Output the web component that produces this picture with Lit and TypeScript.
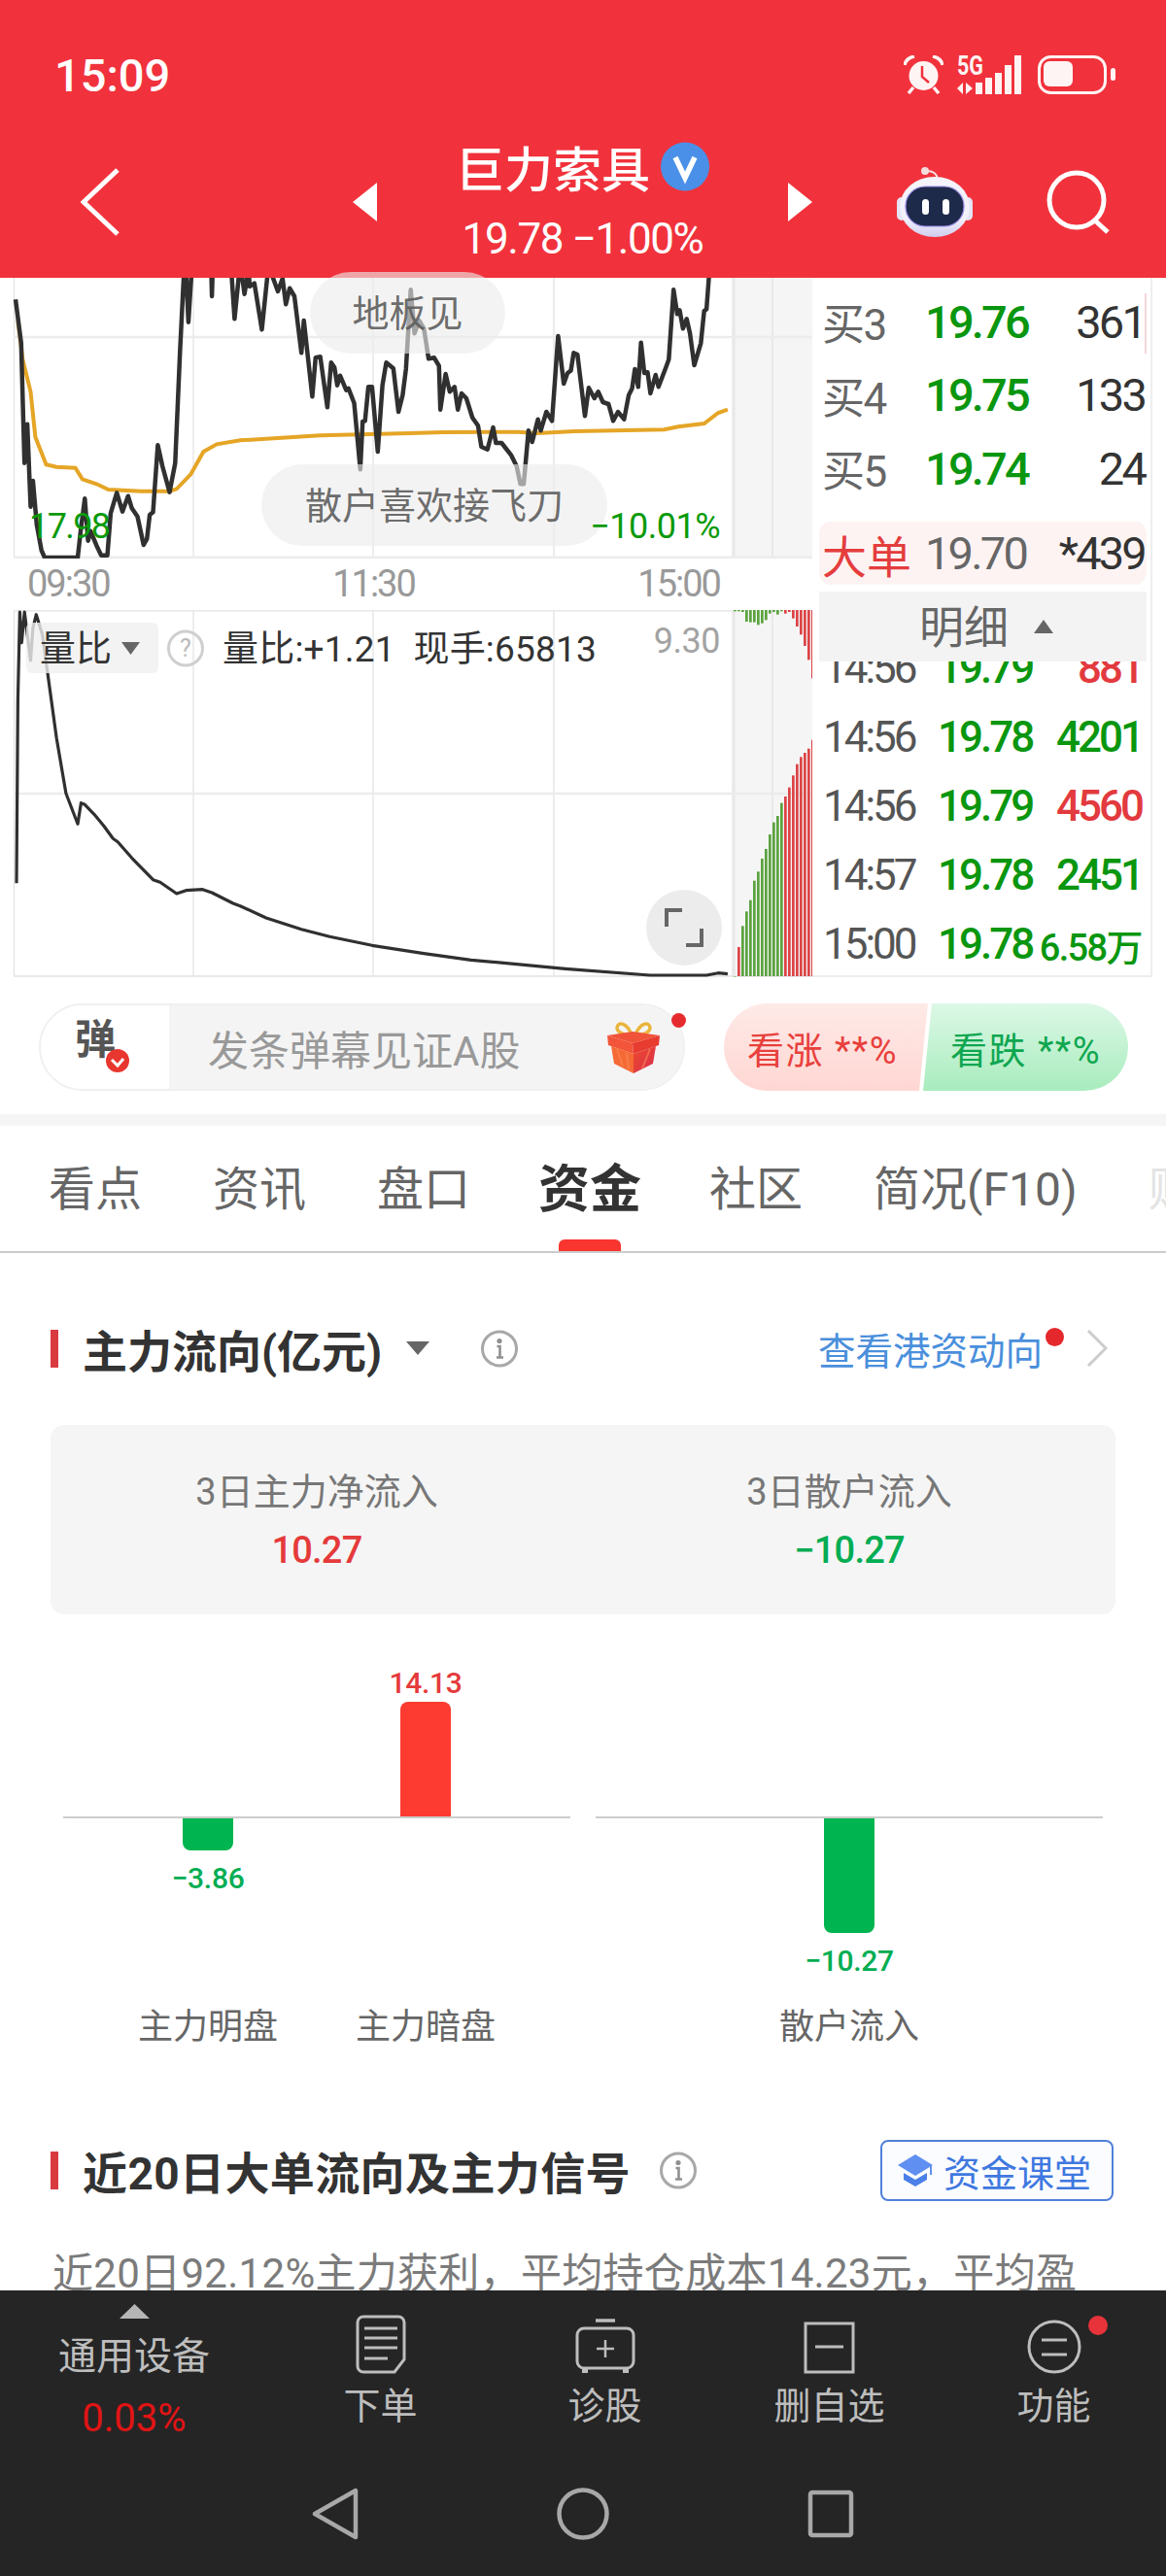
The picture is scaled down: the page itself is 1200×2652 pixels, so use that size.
import { css, html, LitElement, svg } from "lit";
import { customElement } from "lit/decorators.js";

// traces read off the reference; x is scaled 2.063, y is scaled 3 from page coords
const PRICE = [
  [33, 85], [45, 220], [52, 590], [58, 470], [65, 725], [70, 645], [78, 780], [88, 860], [95, 882], [165, 882],
  [172, 790], [180, 700], [187, 830], [192, 800], [205, 845], [215, 875], [228, 875], [235, 745], [248, 682],
  [260, 740], [272, 692], [280, 730], [292, 755], [305, 843], [312, 825], [318, 750], [325, 742], [335, 535],
  [345, 600], [360, 680], [372, 590], [382, 250], [390, 20], [394, -30], [400, 155], [408, -30], [448, -30],
  [450, 75], [452, -30], [490, -30], [498, 145], [510, -30], [519, 68], [528, -10], [530, 45], [540, 35],
  [556, 178], [570, -20], [590, 60], [600, 20], [607, 100], [615, 50], [625, 75], [640, 250], [645, 150],
  [663, 385], [670, 265], [680, 262], [695, 418], [703, 280], [710, 295], [716, 350], [722, 320], [735, 365],
  [740, 360], [752, 405], [765, 610], [770, 462], [775, 460], [782, 355], [790, 355], [802, 555], [812, 350],
  [820, 280], [835, 298], [846, 432], [855, 380], [862, 300], [872, 55], [880, 190], [890, 150], [900, 175],
  [910, 268], [922, 265], [932, 290], [935, 425], [946, 315], [955, 370], [965, 355], [972, 425], [980, 375],
  [990, 390], [1003, 450], [1015, 475], [1022, 540], [1035, 548], [1047, 480], [1053, 528], [1065, 528],
  [1085, 565], [1097, 600], [1105, 655], [1112, 655], [1122, 490], [1130, 525], [1142, 455], [1148, 490],
  [1160, 432], [1172, 460], [1185, 198], [1197, 345], [1205, 312], [1212, 305], [1218, 250], [1226, 255],
  [1242, 445], [1250, 358], [1262, 390], [1270, 370], [1280, 402], [1292, 408], [1302, 460], [1312, 432],
  [1325, 455], [1335, 380], [1342, 360], [1348, 300], [1355, 355], [1361, 218], [1368, 312], [1375, 310],
  [1381, 375], [1392, 318], [1398, 355], [1415, 290], [1420, 270], [1430, 55], [1438, 130], [1443, 118],
  [1450, 175], [1458, 145], [1465, 190], [1474, 288], [1488, 220], [1495, 120], [1500, 115], [1505, 20], [1508, -30],
];
const AVERAGE = [
  [38, 150], [48, 270], [65, 370], [75, 510], [98, 595], [120, 602], [160, 605], [175, 640], [205, 655], [230, 672],
  [300, 677], [360, 677], [375, 670], [405, 625], [432, 555], [460, 532], [510, 520], [680, 505], [870, 498],
  [940, 495], [1100, 494], [1140, 498], [1220, 492], [1410, 487], [1440, 478], [1495, 468], [1525, 435], [1545, 425],
];
const RATIO = [
  [35, 868], [38, 300], [42, 30], [46, 125], [52, 30], [58, 100], [65, 180], [70, 80], [77, 38], [90, 100],
  [105, 260], [120, 420], [140, 590], [165, 685], [172, 620], [180, 625], [200, 655], [220, 690], [240, 730],
  [250, 740], [280, 790], [325, 857], [340, 865], [375, 900], [395, 890], [430, 887], [450, 897], [495, 930],
  [510, 938], [565, 975], [640, 1010], [700, 1033], [790, 1060], [900, 1085], [1000, 1105], [1200, 1132],
  [1380, 1152], [1500, 1152], [1525, 1145], [1545, 1148],
];
const BARS_DOWN = [28, 28, 30, 60, 62, 62, 70, 65, 55, 35, 30, 38, 28, 35, 30, 50, 75, 100, 135, 178, 235];
const BARS_UP = [1155, 1065, 1000, 955, 920, 860, 832, 792, 762, 717, 680, 660, 620, 600, 572, 535, 500, 478, 465, 452, 425];

const points = (trace: number[][], originY: number) =>
  trace.map(([x, y]) => `${(x / 2.063).toFixed(1)},${(originY + y / 3).toFixed(1)}`).join(" ");

const BOOK = [
  ["买3", "19.76", "361"],
  ["买4", "19.75", "133"],
  ["买5", "19.74", "24"],
];
const TICKS = [
  ["14:56", "19.79", "881", "up"],
  ["14:56", "19.78", "4201", "down"],
  ["14:56", "19.79", "4560", "up"],
  ["14:57", "19.78", "2451", "down"],
  ["15:00", "19.78", "6.58万", "down small"],
];
const TABS = ["看点", "资讯", "盘口", "资金", "社区", "简况(F10)", "财务"];

const infoIcon = html`<svg class="info" viewBox="0 0 38 39">
  <circle cx="19" cy="19.5" r="17.5" fill="none" stroke="#a8a8a8" stroke-width="3" />
  <circle cx="19" cy="11.5" r="2.6" fill="#909090" />
  <path d="M16.5 17h3v11M16 28.500h7" fill="none" stroke="#909090" stroke-width="2.600" />
</svg>`;

@customElement("app-root")
export class AppRoot extends LitElement {
  static styles = css`
    :host {
      display: block;
      width: 1200px;
      height: 2652px;
      overflow: hidden;
      background: #fff;
      color: #333;
      font-family: Roboto, "Noto Sans CJK SC", sans-serif;
    }
    svg {
      display: block;
      flex: none;
    }
    .page {
      display: flex;
      flex-direction: column;
      height: 2652px;
    }

    /* header */
    .header {
      height: 286px;
      flex: none;
      background: #f1323c;
      color: #fff;
    }
    .status {
      height: 130px;
      display: flex;
      align-items: center;
      padding: 24px 0 0 56px;
      box-sizing: border-box;
    }
    .clock {
      font-size: 47px;
      font-weight: 500;
      width: 874px;
    }
    .signal {
      margin: 0 17px 0 14px;
    }
    .nav {
      height: 156px;
      display: flex;
      align-items: center;
      padding-left: 83px;
    }
    .symbol {
      width: 423px;
      display: flex;
      flex-direction: column;
      align-items: center;
    }
    .name {
      display: flex;
      align-items: center;
      gap: 11px;
      height: 60px;
      font-size: 50px;
      font-weight: 500;
      margin-top: -4px;
    }
    .quote-line {
      margin-top: 20px;
      font-size: 44px;
      line-height: 50px;
      letter-spacing: -1.400px;
    }

    /* quote block */
    .quote {
      display: flex;
      height: 720px;
      flex: none;
    }
    .charts {
      width: 836px;
      flex: none;
      position: relative;
    }
    .axis {
      height: 53px;
      display: flex;
      justify-content: space-between;
      align-items: center;
      padding: 0 95px 0 28px;
      color: #999;
      font-size: 38px;
      line-height: 53px;
      letter-spacing: -2px;
    }
    .hint {
      position: absolute;
      box-sizing: border-box;
      padding-bottom: 6px;
      display: flex;
      align-items: center;
      justify-content: center;
      height: 84px;
      border-radius: 42px;
      background: rgba(236, 236, 236, 0.62);
      color: rgba(90, 90, 90, 0.9);
      font-size: 38px;
    }
    .hint.a {
      left: 319px;
      top: -6px;
      width: 201px;
    }
    .hint.b {
      left: 269px;
      top: 192px;
      width: 356px;
    }
    .limit {
      position: absolute;
      top: 240px;
      color: #0a9a0a;
      font-size: 36px;
      line-height: 32px;
    }
    .limit.low {
      left: 30px;
      letter-spacing: -1.600px;
    }
    .limit.pct {
      right: 95px;
      letter-spacing: -0.500px;
    }
    .ratio-bar {
      position: absolute;
      left: 27px;
      top: 355px;
      display: flex;
      align-items: center;
      width: 714px;
      height: 52px;
    }
    .picker {
      width: 136px;
      height: 52px;
      box-sizing: border-box;
      padding: 0 0 5px 14px;
      display: flex;
      align-items: center;
      gap: 10px;
      border-radius: 6px;
      background: rgba(240, 240, 240, 0.8);
      font-size: 37px;
      white-space: nowrap;
    }
    .picker svg {
      margin-top: 5px;
    }
    .ratio-text {
      margin: -5px 0 0 19px;
      font-size: 37px;
      letter-spacing: 0.200px;
      white-space: pre;
      flex: 1;
    }
    .ratio-max {
      color: #a3a3a3;
      font-size: 36px;
      letter-spacing: -0.500px;
      margin-top: -14px;
    }
    .expand {
      position: absolute;
      left: 665px;
      top: 630px;
      width: 78px;
      height: 78px;
      border-radius: 50%;
      background: #ececec;
      display: flex;
      align-items: center;
      justify-content: center;
    }

    /* right column */
    .panel {
      width: 350px;
      flex: none;
      box-sizing: border-box;
      border-right: 2px solid #eee;
      border-bottom: 2px solid #eee;
      padding-top: 9px;
      position: relative;
    }
    .book {
      height: 75.500px;
      box-sizing: border-box;
      padding: 0 6px 3px 10px;
      display: grid;
      grid-template-columns: 106px 108px 1fr;
      align-items: center;
      font-size: 47px;
      letter-spacing: -2.800px;
    }
    .book .label {
      color: #666;
      font-size: 44px;
      letter-spacing: -1.500px;
    }
    .book .qty {
      text-align: right;
    }
    .green {
      color: #0a960f;
      font-weight: 500;
    }
    .pink-mark {
      position: absolute;
      left: 342px;
      top: 16px;
      width: 2px;
      height: 62px;
      background: #f7d5d8;
    }
    .big {
      height: 65px;
      box-sizing: border-box;
      margin: 15px 4px 0 7px;
      padding: 0 2px 5px 3px;
      border-radius: 12px;
      background: #fdf3f3;
      display: grid;
      grid-template-columns: 106px 108px 1fr;
      align-items: center;
      font-size: 47px;
      letter-spacing: -2.800px;
    }
    .big .label {
      color: #e43d3d;
      font-size: 46px;
      letter-spacing: 0;
      white-space: nowrap;
    }
    .big .price {
      color: #666;
    }
    .big .qty {
      text-align: right;
    }
    .toggle {
      position: relative;
      z-index: 1;
      height: 72px;
      box-sizing: border-box;
      margin: 7px 4px 0 7px;
      background: #f3f3f3;
      display: flex;
      align-items: center;
      justify-content: center;
      gap: 26px;
      padding: 0 0 5px 7px;
      color: #666;
      font-size: 46px;
    }
    .toggle svg {
      margin-top: 5px;
    }
    .ticks {
      height: 323px;
      overflow: hidden;
    }
    .tick-list {
      margin-top: -29px;
    }
    .tick {
      height: 71px;
      box-sizing: border-box;
      padding: 2px 9px 0 11px;
      display: grid;
      grid-template-columns: 118px 95px 1fr;
      align-items: center;
      font-size: 44px;
      letter-spacing: -3px;
      color: #0a960f;
    }
    .tick .price-cell {
      font-weight: 500;
    }
    .tick .time {
      color: #555;
    }
    .tick .qty {
      text-align: right;
      font-weight: 500;
    }
    .tick .qty.up {
      color: #e23a3e;
    }
    .tick .qty.small {
      font-size: 38px;
      letter-spacing: -1.600px;
      white-space: nowrap;
    }

    /* danmu + vote */
    .actions {
      display: flex;
      flex: none;
      height: 90px;
      padding: 27px 0 24px 40px;
    }
    .danmu {
      position: relative;
      width: 665px;
      height: 90px;
      box-sizing: border-box;
      display: flex;
      border: 2px solid #f0f0f0;
      border-radius: 45px;
      overflow: hidden;
    }
    .danmu-icon {
      position: relative;
      width: 132px;
      flex: none;
      background: #fff;
      box-sizing: border-box;
      padding: 5px 0 0 35px;
      color: #555;
      font-size: 42px;
      font-weight: 700;
      line-height: 62px;
    }
    .danmu-icon svg {
      position: absolute;
      left: 67px;
      top: 45px;
    }
    .danmu-input {
      flex: 1;
      display: flex;
      align-items: center;
      background: #f4f4f4;
      padding-left: 40px;
      color: #999;
      font-size: 42px;
      white-space: nowrap;
    }
    .danmu-input svg {
      margin-left: 90px;
      margin-top: 2px;
    }
    .outer-dot {
      width: 15px;
      height: 15px;
      margin: 10px 0 0 -14px;
      border-radius: 50%;
      background: #e62b2e;
      flex: none;
      position: relative;
    }
    .vote {
      height: 90px;
      display: flex;
      align-items: center;
      box-sizing: border-box;
      font-size: 38px;
      letter-spacing: 1.500px;
      white-space: nowrap;
    }
    .vote.up {
      width: 210px;
      margin-left: 39px;
      padding-left: 24px;
      border-radius: 45px 0 0 45px;
      background: linear-gradient(#feeae7, #ffd7d3);
      color: #e8403c;
      clip-path: polygon(0 0, 100% 0, 201px 100%, 0 100%);
    }
    .vote.down {
      width: 211px;
      margin-left: -5px;
      padding-left: 28px;
      border-radius: 0 45px 45px 0;
      background: linear-gradient(#ddf8e7, #a8ecbd);
      color: #0fa650;
      clip-path: polygon(9px 0, 100% 0, 100% 100%, 0 100%);
    }
    .band {
      height: 12px;
      flex: none;
      background: #f5f5f5;
    }

    /* tabs */
    .tabs {
      flex: none;
      height: 131px;
      box-sizing: border-box;
      display: flex;
      align-items: center;
      gap: 73px;
      padding: 0 0 0 50px;
      border-bottom: 2px solid #ccc;
      color: #666;
      font-size: 48px;
      white-space: nowrap;
      overflow: hidden;
    }
    .tab {
      position: relative;
      height: 129px;
      line-height: 132px;
    }
    .tab.active {
      margin: 0 -3px;
      color: #333;
      font-size: 53px;
      font-weight: 700;
    }
    .tab.active::after {
      content: "";
      position: absolute;
      left: 21px;
      bottom: 0;
      width: 64px;
      height: 12px;
      border-radius: 6px 6px 0 0;
      background: #f8352f;
    }
    .tab.faded {
      color: #e4e4e4;
    }

    /* fund section */
    .body {
      flex: 1;
      min-height: 0;
      overflow: hidden;
      padding: 0 52px;
    }
    .title-row {
      display: flex;
      align-items: center;
    }
    .title-row.first {
      margin-top: 78px;
      height: 40px;
    }
    .title-mark {
      width: 8px;
      height: 39px;
      background: #d93a3f;
      margin-right: 25px;
      flex: none;
    }
    .title {
      font-size: 46px;
      font-weight: 700;
      white-space: nowrap;
    }
    .title-row .drop {
      margin: 0 53px 0 25px;
    }
    .info {
      width: 38px;
      height: 39px;
    }
    .more {
      margin-left: auto;
      color: #4a8fdc;
      font-size: 38.500px;
      white-space: nowrap;
    }
    .more-dot {
      width: 19px;
      height: 19px;
      margin: -24px 23px 0 3px;
      border-radius: 50%;
      background: #e5282c;
      flex: none;
    }
    .more-arrow {
      margin-right: 8px;
    }
    .summary {
      margin-top: 59px;
      height: 195px;
      display: grid;
      grid-template-columns: 548px 548px;
      background: #f5f5f5;
      border-radius: 14px;
      text-align: center;
    }
    .summary .cap {
      margin-top: 44px;
      color: #777;
      font-size: 38px;
      line-height: 50px;
    }
    .summary .num {
      margin-top: 13px;
      font-size: 38px;
      font-weight: 500;
      line-height: 44px;
      letter-spacing: -0.800px;
    }
    .red {
      color: #e53a3a;
    }
    .lime {
      color: #00ad52;
    }
    .flows {
      display: flex;
      gap: 26px;
      margin: 0 13px;
    }
    .flow {
      position: relative;
      width: 522px;
      height: 448px;
      display: flex;
      justify-content: center;
    }
    .flow::before {
      content: "";
      position: absolute;
      left: 0;
      right: 0;
      top: 208px;
      height: 2px;
      background: #ccc;
    }
    .col {
      width: 224px;
      display: flex;
      flex-direction: column;
      align-items: center;
    }
    .above {
      height: 208px;
      display: flex;
      flex-direction: column;
      justify-content: flex-end;
      align-items: center;
    }
    .below {
      height: 240px;
      box-sizing: border-box;
      padding-top: 2px;
      display: flex;
      flex-direction: column;
      align-items: center;
    }
    .bar {
      width: 52px;
      flex: none;
    }
    .bar.pos {
      background: #fd3b31;
      border-radius: 8px 8px 0 0;
    }
    .bar.neg {
      background: #00b450;
      border-radius: 0 0 8px 8px;
    }
    .val {
      font-size: 30px;
      font-weight: 500;
      letter-spacing: -0.300px;
      line-height: 36px;
    }
    .above .val {
      margin-bottom: 1px;
    }
    .below .val {
      margin-top: 11px;
    }
    .col-name {
      margin-top: auto;
      color: #666;
      font-size: 36px;
      line-height: 46px;
    }
    .signal-row {
      margin-top: 92px;
      height: 64px;
    }
    .signal-row .title {
      letter-spacing: 0.4px;
    }
    .signal-row .info {
      margin-left: 30px;
    }
    .lesson {
      margin: 0 2px 0 auto;
      width: 240px;
      height: 63px;
      box-sizing: border-box;
      display: flex;
      align-items: center;
      gap: 11px;
      padding-left: 16px;
      border: 2px solid #5080d8;
      border-radius: 8px;
      background: #fbfcff;
      color: #3f78e0;
      font-size: 38px;
      white-space: nowrap;
    }
    .desc {
      margin: 47px 0 0 2px;
      color: #7b7b7b;
      font-size: 42px;
      letter-spacing: 0.300px;
      line-height: 56px;
      white-space: nowrap;
    }

    /* bottom bar */
    .dock {
      flex: none;
      height: 294px;
      background: #252525;
      color: #bdbdbd;
    }
    .dock-items {
      height: 180px;
      display: grid;
      grid-template-columns: 276px repeat(4, 231px);
    }
    .dock-item {
      position: relative;
      display: flex;
      flex-direction: column;
      align-items: center;
      padding-top: 25px;
      font-size: 38px;
      line-height: 50px;
    }
    .dock-icon {
      height: 61px;
      margin-bottom: 8px;
      display: flex;
      align-items: flex-end;
    }
    .dock-item.sector {
      padding-top: 14px;
    }
    .sector .name-line {
      margin-top: 14px;
      font-size: 39px;
    }
    .sector .pct {
      margin-top: 14px;
      color: #e01414;
      font-size: 40px;
      line-height: 50px;
    }
    .dock-dot {
      position: absolute;
      left: 151px;
      top: 26px;
      width: 20px;
      height: 20px;
      border-radius: 50%;
      background: #e8333a;
    }
    .sysnav {
      height: 100px;
      display: grid;
      grid-template-columns: repeat(3, 255px);
      justify-items: center;
      align-items: center;
      padding-left: 217px;
    }
  `;

  private renderGrid(top: number, height: number, midY: number) {
    return svg`
      <rect x="753" y=${top} width="83" height=${height} fill="#f5f5f5" />
      <path d="M14.500 ${top}V${top + height}M199 ${top}V${top + height}M384 ${top}V${top + height}M570 ${top}V${top + height}M795 ${top}V${top + height}" stroke="#e2e2e2" stroke-width="1.200" fill="none" />
      <path d="M755 ${top}V${top + height}" stroke="#e8e8e8" stroke-width="3" />
      <path d="M14 ${midY}H836" stroke="#ececec" stroke-width="2.500" />
    `;
  }

  private renderTopChart() {
    return html`<svg width="836" height="289" viewBox="0 286 836 289">
      ${this.renderGrid(286, 289, 347)}
      <path d="M14 574H836" stroke="#ececec" stroke-width="3" />
      <polyline points=${points(AVERAGE, 280)} fill="none" stroke="#e5a526" stroke-width="4" />
      <polyline points=${points(PRICE, 280)} fill="none" stroke="#303030" stroke-width="4.500" stroke-linejoin="round" />
    </svg>`;
  }

  private renderSubChart() {
    const bars = (start: number, end: number, i: number, color: string) =>
      svg`<rect x=${755 + 4 * i} y=${start} width="2.700" height=${Math.max(end - start, 0.5)} fill=${color} />`;
    return html`<svg width="836" height="378" viewBox="0 628 836 378">
      ${this.renderGrid(628, 377, 817)}
      <path d="M14 628.500H753M14 1005H836" stroke="#e8e8e8" stroke-width="2" />
      ${BARS_DOWN.map((y, i) => bars(628, 620 + y / 3, i, i < 13 ? "#5ba33f" : "#dc4447"))}
      ${BARS_UP.map((y, i) => bars(620 + y / 3, 1005, i, i === 1 || i > 12 ? "#dc4447" : "#5ba33f"))}
      <polyline points=${points(RATIO, 620)} fill="none" stroke="#303030" stroke-width="3.200" stroke-linejoin="round" />
    </svg>`;
  }

  private renderRobot() {
    return html`<svg width="80" height="74" viewBox="0 0 80 74" style="margin-left:87px">
      <defs>
        <linearGradient id="head" x1="0" y1="0" x2="0" y2="1">
          <stop offset="0" stop-color="#f4f4fa" />
          <stop offset="0.7" stop-color="#f2f1fb" />
          <stop offset="1" stop-color="#cfcdee" />
        </linearGradient>
      </defs>
      <circle cx="29" cy="5" r="4" fill="#f5dcdc" />
      <path d="M31 5c6 0 10 3 11 8" fill="none" stroke="#f5dcdc" stroke-width="2" />
      <rect x="0" y="32" width="10" height="24" rx="5" fill="#e4e3f4" />
      <rect x="68" y="32" width="10" height="24" rx="5" fill="#e4e3f4" />
      <ellipse cx="39" cy="42" rx="36" ry="31" fill="url(#head)" />
      <rect x="9" y="21" width="60" height="41" rx="20" fill="#1e2a4a" stroke="#9e8ee8" stroke-width="1.200" />
      <rect x="26" y="34" width="7" height="16" rx="3.500" fill="#fff" />
      <rect x="47" y="34" width="7" height="16" rx="3.500" fill="#fff" />
    </svg>`;
  }

  private renderHeader() {
    return html`<div class="header">
      <div class="status">
        <div class="clock">15:09</div>
        <svg width="41" height="40" viewBox="0 0 41 40">
          <circle cx="20.500" cy="21" r="15" fill="#fff4f4" />
          <path d="M19 11v11l7 6" fill="none" stroke="#f1323c" stroke-width="2.500" />
          <path d="M1 10C2 5 6 2 11 1M40 10C39 5 35 2 30 1M10 33l-5 6M31 33l5 6" fill="none" stroke="#fff4f4" stroke-width="3.500" />
        </svg>
        <svg class="signal" width="66" height="40" viewBox="0 0 66 40">
          <text x="0" y="20" font-size="27" font-weight="700" fill="#fff4f4" textLength="27" lengthAdjust="spacingAndGlyphs">5G</text>
          <path d="M0 34 6 28V40ZM9 28V40L16 34Z" fill="#fff4f4" />
          <path d="M19 28h7v12h-7ZM29 23h7v17h-7ZM39 18h7v22h-7ZM49 10h7v30h-7ZM59 0h7v40h-7Z" fill="#fff4f4" />
        </svg>
        <svg width="80" height="40" viewBox="0 0 80 40">
          <rect x="1.500" y="1.500" width="68" height="37" rx="12" fill="none" stroke="#fff4f4" stroke-width="3" />
          <rect x="6" y="6" width="30" height="26" rx="6" fill="#fff4f4" />
          <rect x="75" y="13" width="5" height="13" rx="2.500" fill="#fff4f4" />
        </svg>
      </div>
      <div class="nav">
        <svg width="40" height="70" viewBox="0 0 40 70">
          <path d="M38 2 3 35l35 33" fill="none" stroke="#fff" stroke-width="5" />
        </svg>
        <svg width="25" height="40" viewBox="0 0 25 40" style="margin-left:240px">
          <path d="M25 0V40L0 20Z" fill="#fff" />
        </svg>
        <div class="symbol">
          <div class="name">
            巨力索具
            <svg width="50" height="51" viewBox="0 0 50 51">
              <circle cx="25" cy="25.500" r="25" fill="#4a90e8" />
              <path d="M15 16l10 21 10-21" fill="none" stroke="#fff" stroke-width="5.500" />
            </svg>
          </div>
          <div class="quote-line">19.78 −1.00%</div>
        </div>
        <svg width="25" height="40" viewBox="0 0 25 40">
          <path d="M0 0V40L25 20Z" fill="#fff" />
        </svg>
        ${this.renderRobot()}
        <svg width="66" height="66" viewBox="0 0 66 66" style="margin-left:74px">
          <circle cx="31" cy="31" r="28" fill="none" stroke="#fff" stroke-width="5" />
          <path d="M51 53 63 64" stroke="#fff" stroke-width="5" />
        </svg>
      </div>
    </div>`;
  }

  private renderPanel() {
    return html`<div class="panel">
      <div class="pink-mark"></div>
      ${BOOK.map(
        ([label, price, qty]) => html`<div class="book">
          <span class="label">${label}</span><span class="green">${price}</span><span class="qty">${qty}</span>
        </div>`,
      )}
      <div class="big">
        <span class="label">大单</span><span class="price">19.70</span><span class="qty">*439</span>
      </div>
      <div class="toggle">
        明细
        <svg width="20" height="14" viewBox="0 0 20 14"><path d="M10 0 20 14H0Z" fill="#666" /></svg>
      </div>
      <div class="ticks">
        <div class="tick-list">
          ${TICKS.map(
            ([time, price, qty, kind]) => html`<div class="tick">
              <span class="time">${time}</span><span class="price-cell">${price}</span><span class="qty ${kind}">${qty}</span>
            </div>`,
          )}
        </div>
      </div>
    </div>`;
  }

  private renderQuote() {
    return html`<div class="quote">
      <div class="charts">
        ${this.renderTopChart()}
        <div class="axis"><span>09:30</span><span>11:30</span><span>15:00</span></div>
        ${this.renderSubChart()}
        <div class="hint a">地板见</div>
        <div class="hint b">散户喜欢接飞刀</div>
        <div class="limit low">17.98</div>
        <div class="limit pct">−10.01%</div>
        <div class="ratio-bar">
          <div class="picker">
            量比
            <svg width="19" height="13" viewBox="0 0 19 13"><path d="M0 0H19L9.500 13Z" fill="#666" /></svg>
          </div>
          <svg width="38" height="39" viewBox="0 0 38 39" style="margin-left:9px">
            <circle cx="19" cy="19.500" r="17.500" fill="none" stroke="#cfcfcf" stroke-width="3" />
            <text x="19" y="28" text-anchor="middle" font-size="25" fill="#bbb">?</text>
          </svg>
          <div class="ratio-text">量比:+1.21  现手:65813</div>
          <div class="ratio-max">9.30</div>
        </div>
        <div class="expand">
          <svg width="40" height="40" viewBox="0 0 40 40">
            <path d="M2 19V2H18M38 21V38H22" fill="none" stroke="#666" stroke-width="4" />
          </svg>
        </div>
      </div>
      ${this.renderPanel()}
    </div>`;
  }

  private renderGift() {
    return html`<svg width="54" height="54" viewBox="0 0 54 54">
      <defs>
        <linearGradient id="giftRight" x1="0" y1="0" x2="1" y2="1">
          <stop offset="0" stop-color="#ee4a2c" />
          <stop offset="1" stop-color="#d92c4e" />
        </linearGradient>
      </defs>
      <path d="M25 13C20 1 11 -1 10 6c0 5 8 8 15 7ZM29 13C34 1 43 -1 44 6c0 5-8 8-15 7Z" fill="none" stroke="#eab53c" stroke-width="3.500" />
      <path d="M0 14 26 10 54 14 26 22Z" fill="#f0533a" />
      <path d="M0 14 26 22 27 33 1 24Z" fill="#f2553a" />
      <path d="M54 14 26 22 27 33 53 24Z" fill="#e83c30" />
      <path d="M4 25 27 33V53L7 43Z" fill="#f56a34" />
      <path d="M50 25 27 33V53L47 43Z" fill="url(#giftRight)" />
      <path d="M10 28 16 46M20 32 22 49M44 28 36 48" stroke="#f98a58" stroke-width="2" opacity="0.600" />
    </svg>`;
  }

  private renderActions() {
    return html`<div class="actions">
      <div class="danmu">
        <div class="danmu-icon">
          弹
          <svg width="24" height="24" viewBox="0 0 24 24">
            <circle cx="12" cy="12" r="12" fill="#e8372f" />
            <path d="M6 11l6 6 6-7" fill="none" stroke="#fff" stroke-width="3" />
          </svg>
        </div>
        <div class="danmu-input">发条弹幕见证A股 ${this.renderGift()}</div>
      </div>
      <div class="outer-dot"></div>
      <div class="vote up">看涨 **%</div>
      <div class="vote down">看跌 **%</div>
    </div>`;
  }

  private renderFlows() {
    return html`<div class="flows">
      <div class="flow">
        <div class="col">
          <div class="above"></div>
          <div class="below">
            <div class="bar neg" style="height:33px"></div>
            <div class="val lime">−3.86</div>
            <div class="col-name">主力明盘</div>
          </div>
        </div>
        <div class="col">
          <div class="above">
            <div class="val red">14.13</div>
            <div class="bar pos" style="height:118px"></div>
          </div>
          <div class="below">
            <div class="col-name">主力暗盘</div>
          </div>
        </div>
      </div>
      <div class="flow">
        <div class="col">
          <div class="above"></div>
          <div class="below">
            <div class="bar neg" style="height:118px"></div>
            <div class="val lime">−10.27</div>
            <div class="col-name">散户流入</div>
          </div>
        </div>
      </div>
    </div>`;
  }

  private renderBody() {
    return html`<div class="body">
      <div class="title-row first">
        <div class="title-mark"></div>
        <div class="title">主力流向(亿元)</div>
        <svg class="drop" width="24" height="14" viewBox="0 0 24 14"><path d="M0 0H24L12 14Z" fill="#666" /></svg>
        ${infoIcon}
        <div class="more">查看港资动向</div>
        <div class="more-dot"></div>
        <svg class="more-arrow" width="22" height="38" viewBox="0 0 22 38">
          <path d="M2 1 20 19 2 37" fill="none" stroke="#ccc" stroke-width="3" />
        </svg>
      </div>
      <div class="summary">
        <div><div class="cap">3日主力净流入</div><div class="num red">10.27</div></div>
        <div><div class="cap">3日散户流入</div><div class="num lime">−10.27</div></div>
      </div>
      ${this.renderFlows()}
      <div class="title-row signal-row">
        <div class="title-mark"></div>
        <div class="title">近20日大单流向及主力信号</div>
        ${infoIcon}
        <div class="lesson">
          <svg width="36" height="33" viewBox="0 0 36 33">
            <path d="M18 0 36 11 18 22 0 11Z" fill="#5f8ff0" />
            <path d="M6 19 18 26 30 19V26L18 33 6 26Z" fill="#4a80e8" />
            <path d="M34 12V21" stroke="#5f8ff0" stroke-width="2" />
          </svg>
          资金课堂
        </div>
      </div>
      <div class="desc">近20日92.12%主力获利，平均持仓成本14.23元，平均盈</div>
    </div>`;
  }

  private renderDock() {
    return html`<div class="dock">
      <div class="dock-items">
        <div class="dock-item sector">
          <svg width="31" height="15" viewBox="0 0 31 15"><path d="M15.500 0 31 15H0Z" fill="#b5b5b5" /></svg>
          <div class="name-line">通用设备</div>
          <div class="pct">0.03%</div>
        </div>
        <div class="dock-item">
          <div class="dock-icon">
            <svg width="52" height="61" viewBox="0 0 52 61">
              <path d="M8 2H44a6 6 0 0 1 6 6V46L40 59H8a6 6 0 0 1-6-6V8a6 6 0 0 1 6-6Z" fill="none" stroke="#bdbdbd" stroke-width="3" />
              <path d="M9 14H43M9 24H43M9 34H43M9 45H33" stroke="#bdbdbd" stroke-width="3" />
            </svg>
          </div>
          下单
        </div>
        <div class="dock-item">
          <div class="dock-icon">
            <svg width="62" height="57" viewBox="0 0 62 57">
              <path d="M21 2H41" stroke="#bdbdbd" stroke-width="3.500" />
              <rect x="2" y="10" width="58" height="41" rx="7" fill="none" stroke="#bdbdbd" stroke-width="3" />
              <path d="M31 22V40M22 31H40" stroke="#bdbdbd" stroke-width="2.500" />
              <path d="M10 52V56M52 52V56" stroke="#bdbdbd" stroke-width="6" />
            </svg>
          </div>
          诊股
        </div>
        <div class="dock-item">
          <div class="dock-icon">
            <svg width="53" height="54" viewBox="0 0 53 54">
              <rect x="2" y="2" width="49" height="50" fill="none" stroke="#bdbdbd" stroke-width="3" />
              <path d="M12 26H41" stroke="#bdbdbd" stroke-width="3" />
            </svg>
          </div>
          删自选
        </div>
        <div class="dock-item">
          <div class="dock-icon">
            <svg width="56" height="56" viewBox="0 0 56 56">
              <circle cx="28" cy="28" r="26" fill="none" stroke="#bdbdbd" stroke-width="3" />
              <path d="M15 21H41M15 36H41" stroke="#bdbdbd" stroke-width="3" />
            </svg>
          </div>
          功能
          <div class="dock-dot"></div>
        </div>
      </div>
      <div class="sysnav">
        <svg width="48" height="54" viewBox="0 0 48 54">
          <path d="M45 3V51L3 27Z" fill="none" stroke="#a8a8a8" stroke-width="4.500" stroke-linejoin="round" />
        </svg>
        <svg width="54" height="54" viewBox="0 0 54 54">
          <circle cx="27" cy="27" r="24.500" fill="none" stroke="#a8a8a8" stroke-width="4.500" />
        </svg>
        <svg width="48" height="50" viewBox="0 0 48 50">
          <rect x="3" y="3" width="42" height="44" rx="2" fill="none" stroke="#a8a8a8" stroke-width="4.500" />
        </svg>
      </div>
    </div>`;
  }

  render() {
    return html`<div class="page">
      ${this.renderHeader()} ${this.renderQuote()} ${this.renderActions()}
      <div class="band"></div>
      <div class="tabs">
        ${TABS.map(
          (tab, i) =>
            html`<div class="tab ${i === 3 ? "active" : ""} ${i === 6 ? "faded" : ""}">${tab}</div>`,
        )}
      </div>
      ${this.renderBody()} ${this.renderDock()}
    </div>`;
  }
}
